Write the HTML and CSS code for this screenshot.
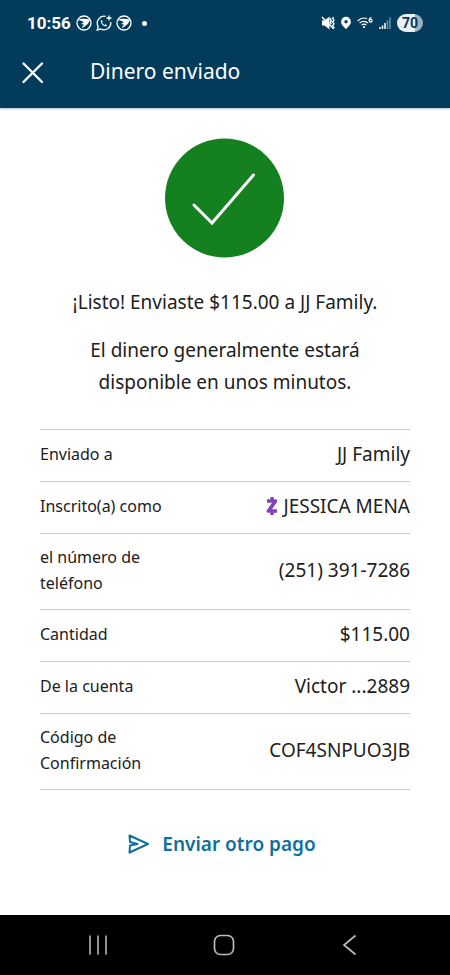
FILE: index.html
```html
<!DOCTYPE html>
<html lang="es">
<head>
<meta charset="utf-8">
<meta name="viewport" content="width=device-width, initial-scale=1">
<title>Dinero enviado</title>
<link rel="stylesheet" href="styles.css">
</head>
<body>
<header class="top">
  <div class="status">
    <div class="status-left">
      <span class="clock">10:56</span>
      <svg class="app-icon" viewBox="0 0 16 16" aria-hidden="true"><circle cx="8" cy="8" r="7" fill="none" stroke="#fff" stroke-width="1.3"/><path d="M1.500 5C5 3.500 9.500 3.300 14 4.500C13.300 8 10.500 10.800 5.800 13.300C6.300 11.600 7.200 10.500 8 9.600L5 9L7.800 7.200C6.500 6 4 5.600 1.500 5Z" fill="#fff"/></svg>
      <svg class="app-icon" viewBox="0 0 16 16" aria-hidden="true"><path d="M9.500 1.400A6.800 6.800 0 0 0 2.200 11.500L1.200 15L4.800 14A6.800 6.800 0 0 0 14.700 7" fill="none" stroke="#fff" stroke-width="1.300"/><path d="M5.300 4.800C4 6 5 8.200 6.500 9.700S10.200 12 11.300 10.600L9.500 9.300L8.500 10C7.300 9.300 6.500 8.400 6.100 7.400L6.800 6.500Z" fill="#fff"/><path d="M13 .5V5.500M10.500 3H15.500" stroke="#fff" stroke-width="1.300"/></svg>
      <svg class="app-icon" viewBox="0 0 16 16" aria-hidden="true"><circle cx="8" cy="8" r="7" fill="none" stroke="#fff" stroke-width="1.3"/><path d="M1.500 5C5 3.500 9.500 3.300 14 4.500C13.300 8 10.500 10.800 5.800 13.300C6.300 11.600 7.200 10.500 8 9.600L5 9L7.800 7.200C6.500 6 4 5.600 1.500 5Z" fill="#fff"/></svg>
      <span class="dot"></span>
    </div>
    <div class="status-right">
      <svg width="14" height="14" viewBox="0 0 14 14" aria-hidden="true"><path d="M1 4.500H3.500L8.500 .5V13.500L3.500 9.500H1Z" fill="#fff"/><path d="M1 1L12.500 12.500" stroke="#fff" stroke-width="1.500"/><path d="M10 2L9.200 3.500L10.500 5L9.200 6.500L10.500 8M12.500 1L11.700 2.500L13 4.200L11.700 6L13 7.800L11.700 9.500L13 11.500L12 13" fill="none" stroke="#fff" stroke-width="1.300"/></svg>
      <svg width="10" height="14" viewBox="0 0 10 14" aria-hidden="true"><path fill-rule="evenodd" d="M5 .8A4.900 4.900 0 0 0 .1 5.700C.1 9 3 10.500 5 13.300C7 10.500 9.900 9 9.900 5.700A4.900 4.900 0 0 0 5 .8ZM5 4A1.700 1.700 0 1 1 5 7.400A1.700 1.700 0 1 1 5 4Z" fill="#fff"/></svg>
      <svg width="16" height="14" viewBox="0 0 16 14" aria-hidden="true"><g fill="none" stroke="#fff" stroke-width="1.200"><path d="M.7 5C3.500 2 7 1.500 10 2.600M2.600 7.100C5 4.900 8.700 4.900 11.200 7.100M4.600 9C6 7.900 8 7.900 9.300 9"/><path d="M14.500 1.500C12.500 2 12 3.500 12.200 4.700"/><circle cx="13.700" cy="4.800" r="1.400"/></g><circle cx="7" cy="11" r="1.100" fill="#fff"/></svg>
      <svg width="12" height="14" viewBox="0 0 12 14" aria-hidden="true"><path d="M1 13V11M3.500 13V9.500M6 13V7" stroke="#fff" stroke-width="1.500"/><path d="M8.500 13V4.500M11 13V1.500" stroke="#7891a1" stroke-width="1.500"/></svg>
      <span class="battery">70</span>
    </div>
  </div>
  <div class="title-bar">
    <button class="close" type="button" aria-label="Cerrar"><svg width="22" height="22" viewBox="0 0 22 22" aria-hidden="true"><path d="M1.500 1.500L20 20M20 1.500L1.500 20" stroke="#fff" stroke-width="2.300" stroke-linecap="round"/></svg></button>
    <h1 class="title">Dinero enviado</h1>
  </div>
</header>
<main class="content">
  <svg class="success" viewBox="0 0 120 120" aria-hidden="true"><circle cx="59.500" cy="60" r="59.500" fill="#148020"/><path d="M29 67L47 85L88.500 37" fill="none" stroke="#fff" stroke-width="3" stroke-linecap="round"/></svg>
  <p class="message">¡Listo! Enviaste $115.00 a JJ Family.</p>
  <p class="message">El dinero generalmente estará<br>disponible en unos minutos.</p>
  <table class="details">
    <tbody>
      <tr><th scope="row">Enviado a</th><td>JJ Family</td></tr>
      <tr><th scope="row">Inscrito(a) como</th><td><span class="member"><svg width="12" height="20" viewBox="0 0 12 20" aria-hidden="true"><path d="M6 1V4M6 16V19" stroke="#8044bd" stroke-width="3.400"/><path d="M1 5H9.500L2.500 15H11" fill="none" stroke="#8044bd" stroke-width="3.700" stroke-linejoin="round"/></svg>JESSICA MENA</span></td></tr>
      <tr><th scope="row">el número de<br>teléfono</th><td>(251) 391-7286</td></tr>
      <tr><th scope="row">Cantidad</th><td>$115.00</td></tr>
      <tr><th scope="row">De la cuenta</th><td>Victor ...2889</td></tr>
      <tr><th scope="row">Código de<br>Confirmación</th><td>COF4SNPUO3JB</td></tr>
    </tbody>
  </table>
  <a class="again" href="#"><svg width="22" height="20" viewBox="0 0 22 20" aria-hidden="true"><path d="M1.500 1.500L20 10L1.500 18.500L2 11.500L9.500 10L2 8Z" fill="none" stroke="#10709c" stroke-width="2" stroke-linejoin="round"/></svg>Enviar otro pago</a>
</main>
<nav class="system" aria-label="Sistema">
  <button type="button" aria-label="Recientes"><svg width="22" height="22" viewBox="0 0 22 22" aria-hidden="true"><path d="M3 1.500V20.500M11 1.500V20.500M19 1.500V20.500" stroke="#aaa" stroke-width="1.700"/></svg></button>
  <button type="button" aria-label="Inicio"><svg width="22" height="22" viewBox="0 0 22 22" aria-hidden="true"><rect x="1.500" y="1.500" width="19" height="19" rx="6" fill="none" stroke="#bbb" stroke-width="1.700"/></svg></button>
  <button type="button" aria-label="Atrás"><svg width="22" height="22" viewBox="0 0 22 22" aria-hidden="true"><path d="M16.500 1.500L5 11L16.500 20.500" fill="none" stroke="#bbb" stroke-width="1.700"/></svg></button>
</nav>
</body>
</html>
```
FILE: styles.css
```css
* { box-sizing: border-box; }
body {
  margin: 0;
  min-height: 100vh;
  display: flex;
  flex-direction: column;
  background: #fff;
  color: #202020;
  font-family: "Noto Sans", sans-serif;
}
button { padding: 0; border: 0; background: none; display: flex; }
.top {
  background: #033b5b;
  color: #fff;
  padding-bottom: 14px;
  box-shadow: 0 1px 2px #a9bdc9;
}
.status {
  display: flex;
  justify-content: space-between;
  align-items: center;
  height: 46px;
  padding: 0 27px;
}
.status-left { display: flex; align-items: center; gap: 4px; }
.clock {
  margin-right: 1px;
  font-family: Roboto, sans-serif;
  font-size: 17px;
  font-weight: 700;
}
.app-icon { width: 16px; height: 16px; }
.dot { width: 5px; height: 5px; margin-left: 6px; border-radius: 50%; background: #fff; }
.status-right { display: flex; align-items: center; gap: 6px; }
.battery {
  width: 26px;
  border-radius: 9px;
  background: linear-gradient(90deg, #eaf0f4 70%, #9db2c0 70%);
  color: #033b5b;
  font-family: Roboto, sans-serif;
  font-size: 14px;
  font-weight: 700;
  line-height: 18px;
  text-align: center;
}
.title-bar { display: flex; align-items: center; gap: 46px; height: 48px; padding: 6px 22px 0; }
.close { width: 22px; color: #fff; }
.title { margin: 0; padding-bottom: 4px; font-size: 21px; font-weight: 400; line-height: 32px; }
.content {
  flex: 1;
  display: flex;
  flex-direction: column;
  align-items: center;
  padding: 30px 40px;
}
.success { width: 120px; height: 120px; margin-bottom: 28px; }
.message { margin: 0 0 16px; font-size: 19px; line-height: 32px; text-align: center; }
.details {
  width: 100%;
  margin: 15px 0 40px;
  border-collapse: collapse;
  border-top: 1px solid #ccc;
}
.details tr { border-bottom: 1px solid #ccc; }
.details th,
.details td { padding: 10px 0 13px; vertical-align: middle; }
.details th { font-size: 16px; font-weight: 400; line-height: 26px; text-align: left; }
.details td { font-size: 19px; line-height: 28px; text-align: right; }
.member { display: flex; justify-content: flex-end; align-items: center; gap: 5px; }
.again {
  display: flex;
  align-items: center;
  gap: 12px;
  padding-right: 6px;
  color: #10709c;
  font-size: 19px;
  font-weight: 600;
  line-height: 28px;
  text-decoration: none;
}
.system {
  display: flex;
  justify-content: space-between;
  align-items: center;
  height: 60px;
  padding: 0 89px 0 87px;
  background: #000;
}
```
